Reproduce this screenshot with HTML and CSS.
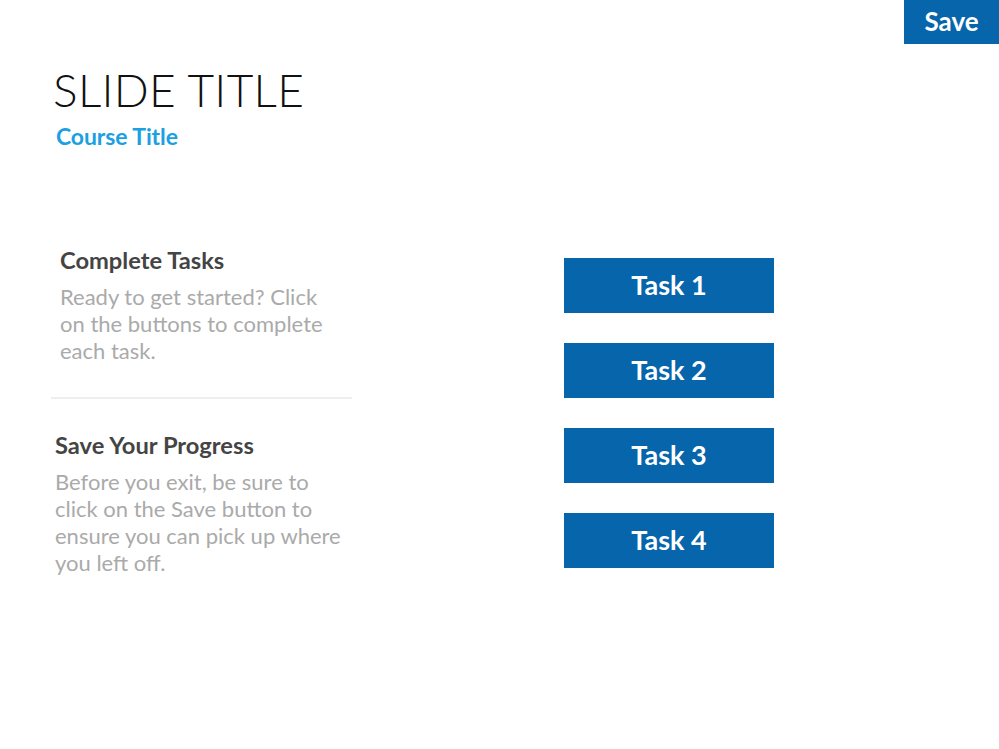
FILE: index.html
```html
<!DOCTYPE html>
<html lang="en">
<head>
<meta charset="utf-8">
<title>Slide</title>
<link rel="stylesheet" href="styles.css">
</head>
<body>
<div class="slide">
  <div class="topbar">
    <button class="save-btn">Save</button>
  </div>
  <header class="titles">
    <h1 class="slide-title">SLIDE TITLE</h1>
    <div class="course-title">Course Title</div>
  </header>
  <main class="content">
    <div class="info">
      <section class="block block-first">
        <h2 class="block-heading">Complete Tasks</h2>
        <p class="block-text">Ready to get started? Click on the buttons to complete each task.</p>
      </section>
      <div class="divider"></div>
      <section class="block block-second">
        <h2 class="block-heading">Save Your Progress</h2>
        <p class="block-text">Before you exit, be sure to click on the Save button to ensure you can pick up where you left off.</p>
      </section>
    </div>
    <div class="tasks">
      <button class="task-btn">Task 1</button>
      <button class="task-btn">Task 2</button>
      <button class="task-btn">Task 3</button>
      <button class="task-btn">Task 4</button>
    </div>
  </main>
</div>
</body>
</html>
```

FILE: styles.css
```css
html, body {
  margin: 0;
  padding: 0;
  background: #ffffff;
}
body {
  font-family: Lato, "Open Sans", "Liberation Sans", sans-serif;
}
.slide {
  width: 999px;
  height: 749px;
  position: relative;
}
.topbar {
  display: flex;
  justify-content: flex-end;
  height: 44px;
}
.save-btn {
  width: 95px;
  height: 44px;
  border: 0;
  margin: 0;
  padding: 0 0 2px;
  background: #0765ab;
  color: #ffffff;
  font-family: Lato, sans-serif;
  font-weight: 700;
  font-size: 26px;
}
.titles {
  padding-left: 53px;
  margin-top: 20px;
}
.slide-title {
  margin: 0;
  font-weight: 300;
  font-size: 46px;
  line-height: 52px;
  color: #111111;
  letter-spacing: 0.3px;
}
.course-title {
  margin-top: 6px;
  padding-left: 3px;
  font-weight: 700;
  font-size: 23px;
  line-height: 28px;
  color: #1ba0e2;
  letter-spacing: -0.1px;
}
.content {
  display: flex;
  margin-top: 96px;
}
.info {
  width: 301px;
  margin-left: 51px;
}
.block-heading {
  margin: 0;
  font-weight: 700;
  font-size: 23.7px;
  line-height: 28px;
  color: #444444;
}
.block-text {
  margin: 9px 0 0;
  font-weight: 400;
  font-size: 22px;
  line-height: 27px;
  color: #aaaaaa;
}
.block-first {
  padding-left: 9px;
  width: 272px;
}
.divider {
  height: 2px;
  background: #eceff2;
  margin: 33px 0 32px;
}
.block-second {
  padding-left: 4px;
  width: 292px;
}
.tasks {
  display: flex;
  flex-direction: column;
  gap: 30px;
  margin-left: 212px;
  margin-top: 12px;
}
.task-btn {
  width: 210px;
  height: 55px;
  border: 0;
  margin: 0;
  padding: 0 0 2px;
  background: #0765ab;
  color: #ffffff;
  font-family: Lato, sans-serif;
  font-weight: 700;
  font-size: 27px;
}
```
